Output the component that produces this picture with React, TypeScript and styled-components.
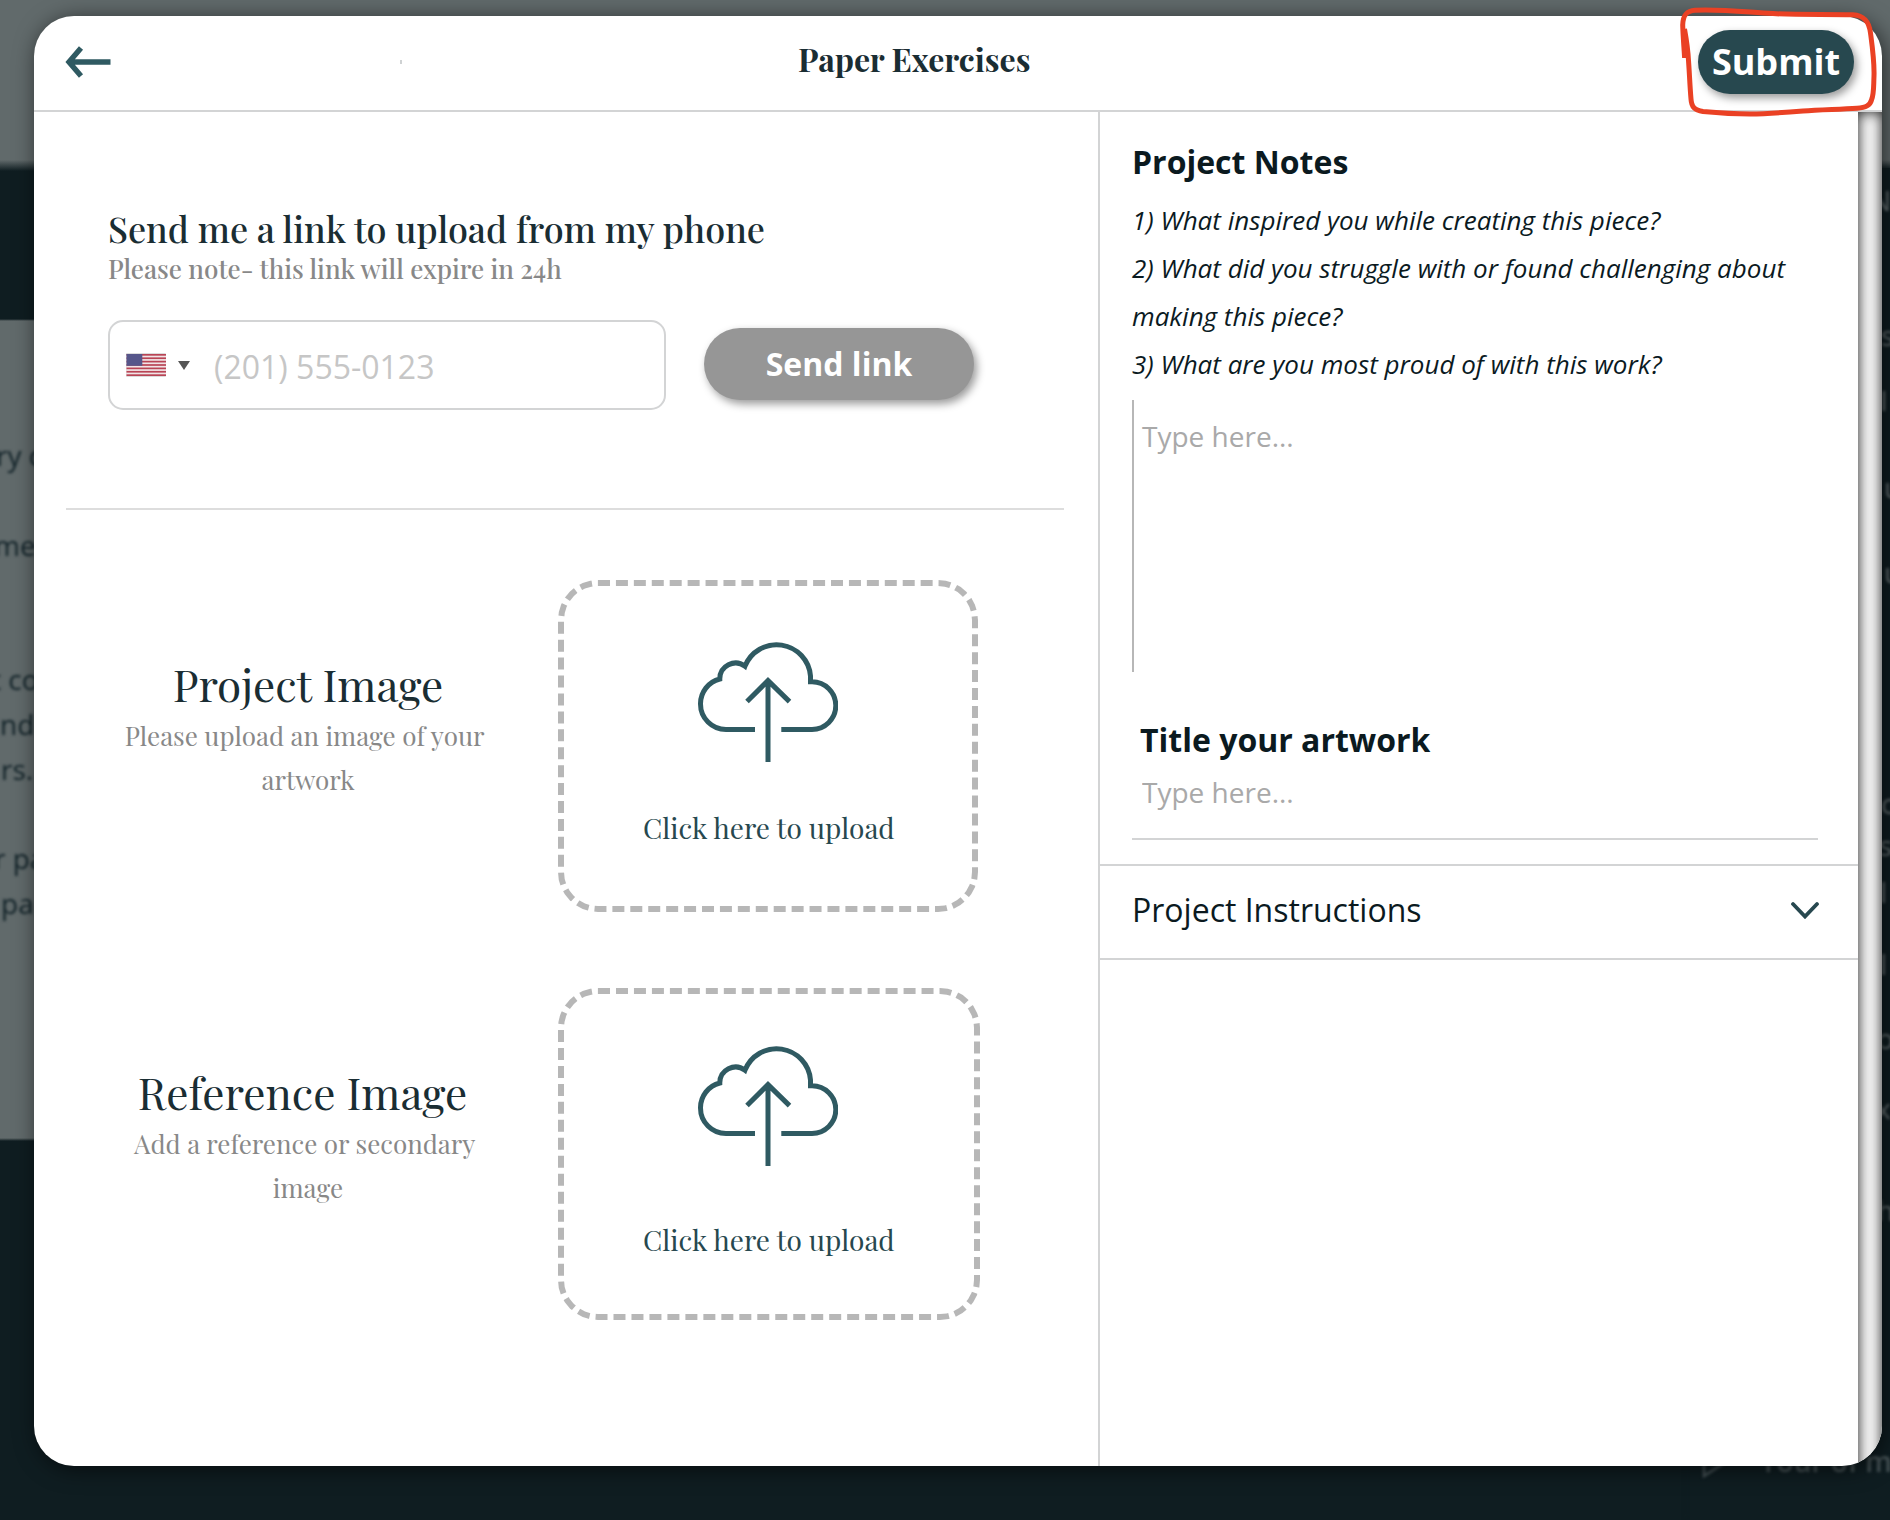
import React from 'react';
import styled, { createGlobalStyle } from 'styled-components';

const serif = `"Playfair Display", "Liberation Serif", serif`;
const sans = `"Open Sans", "Noto Sans", sans-serif`;
const teal = '#2f5a62';
const ink = '#1a2d33';
const line = '#d3d4d5';

const GlobalStyle = createGlobalStyle`
  *, *::before, *::after { box-sizing: border-box; }
  body { margin: 0; background: #0f1d21; font-family: ${sans}; }
  h1, h2, h3, p { margin: 0; font-weight: 400; }
  button, input, textarea { font-family: inherit; }
`;

const Page = styled.div`
  position: relative;
  display: flex;
  width: 1890px;
  height: 1520px;
  padding: 16px 8px 54px 34px;
  overflow: hidden;
`;

/* Dimmed page behind the dialog */
const Backdrop = styled.div`
  position: absolute;
  inset: 0;
  display: flex;
  justify-content: space-between;
  background: linear-gradient(#616a6b 0, #616a6b 160px, #0f1d21 171px, #0f1d21 319px, #616a6b 321px, #616a6b 1138px, #0f1d21 1141px);
`;

const LessonText = styled.div`
  width: 60px;
  padding-top: 433px;
  font-size: 28px;
  font-weight: 500;
  line-height: 44.8px;
  color: #0f2026;
  filter: blur(1.4px);
`;

const LessonLine = styled.p<{ $shift: number }>`
  height: 44.8px;
  font-weight: inherit;
  white-space: pre;
  text-indent: ${(p) => p.$shift}px;
`;

const Outline = styled.div`
  display: flex;
  flex-direction: column;
  width: 200px;
  margin-top: 168px;
  background: #0f1d21;
  box-shadow: 0 0 6px #0f1d21;
  color: #6a7476;
`;

const OutlineItem = styled.div<{ $gap: number; $shift: number }>`
  height: 24px;
  margin: ${(p) => p.$gap}px 0 0 ${(p) => p.$shift}px;
  font-size: 28px;
  line-height: 24px;
  white-space: nowrap;
  filter: blur(1.4px);
`;

const TourRow = styled.div`
  display: flex;
  align-items: center;
  gap: 31px;
  height: 36px;
  margin: 221px -40px 0 11px;
  font-size: 28px;
  font-weight: 600;
  white-space: nowrap;
  color: #465255;
  filter: blur(1.4px);
`;

const Dialog = styled.main`
  position: relative;
  display: flex;
  flex-direction: column;
  width: 1848px;
  height: 1450px;
  border-radius: 40px;
  background: #fff;
  box-shadow: 3px 3px 22px rgba(0, 0, 0, 0.6);
`;

const Header = styled.header`
  display: grid;
  grid-template-columns: 366px 398px auto 1fr;
  align-items: center;
  height: 96px;
  padding-bottom: 2px;
  border-bottom: 2px solid ${line};
`;

const BackButton = styled.button`
  display: flex;
  width: 46px;
  margin-left: 31px;
  padding: 0;
  border: 0;
  background: none;
`;

const Tick = styled.span`
  width: 2px;
  height: 4px;
  background: #cfd2d3;
`;

const Title = styled.h1`
  padding-bottom: 6px;
  font: 700 32px/44px ${serif};
  color: ${ink};
`;

const Pill = styled.button<{ $primary?: boolean }>`
  flex: none;
  width: ${(p) => (p.$primary ? 156 : 270)}px;
  height: ${(p) => (p.$primary ? 64 : 72)}px;
  margin: ${(p) => (p.$primary ? '0 28px 0 auto' : '0 0 2px')};
  padding: 0 0 2px;
  border: 0;
  border-radius: 36px;
  background: ${(p) => (p.$primary ? '#27484f' : '#969696')};
  box-shadow: 3px 4px 8px rgba(0, 0, 0, 0.4);
  font-size: ${(p) => (p.$primary ? 36 : 32)}px;
  font-weight: 700;
  color: #fff;
`;

const Body = styled.div`
  display: grid;
  grid-template-columns: 1064px 1fr 24px;
  flex: 1;
  min-height: 0;
  overflow: hidden;
  border-radius: 0 0 40px 40px;
`;

const UploadPane = styled.section`
  display: flex;
  flex-direction: column;
`;

const LinkSection = styled.div`
  height: 398px;
  margin: 0 34px 0 32px;
  padding: 92px 0 0 42px;
  border-bottom: 2px solid #dddddd;
`;

const LinkHeading = styled.h2`
  font: 500 36px/48px ${serif};
  color: ${ink};
`;

const LinkNote = styled.p`
  font: 500 26px/34px ${serif};
  color: #888888;
`;

const PhoneRow = styled.div`
  display: flex;
  align-items: center;
  gap: 38px;
  margin-top: 34px;
`;

const PhoneField = styled.div`
  display: flex;
  align-items: center;
  width: 558px;
  height: 90px;
  padding-left: 16px;
  border: 2px solid ${line};
  border-radius: 15px;
`;

const Caret = styled.span`
  margin: 0 24px 0 12px;
  border: 6px solid transparent;
  border-top: 9px solid #555;
  border-bottom: 0;
`;

const PhoneInput = styled.input`
  width: 400px;
  height: 60px;
  padding: 2px 0 0;
  border: 0;
  background: none;
  font-size: 32px;
  &::placeholder { color: #c6c6c6; opacity: 1; }
`;

const Uploads = styled.div`
  display: flex;
  flex-direction: column;
  gap: 76px;
  padding: 70px 0 0 74px;
`;

const UploadRow = styled.div`
  display: grid;
  grid-template-columns: 400px auto;
  column-gap: 50px;
  justify-content: start;
`;

const UploadText = styled.div`
  padding-top: 75px;
  text-align: center;
`;

const UploadHeading = styled.h2`
  font: 400 44px/58px ${serif};
  color: ${ink};
`;

const UploadHint = styled.p`
  margin-top: 1px;
  font: 400 26px/44px ${serif};
  color: #888888;
`;

const DropZone = styled.div<{ $width: number; $top: number; $gap: number }>`
  display: flex;
  flex-direction: column;
  gap: ${(p) => p.$gap}px;
  width: ${(p) => p.$width}px;
  height: 332px;
  padding: ${(p) => p.$top}px 0 0 134px;
  border: 6px dashed #b7b7b7;
  border-radius: 40px;
`;

const DropLabel = styled.span`
  width: 252px;
  margin-left: -55px;
  font: 400 28px/38px ${serif};
  white-space: nowrap;
  color: #27484f;
`;

const NotesPane = styled.aside`
  border-left: 2px solid ${line};
`;

const NotesForm = styled.div`
  display: flex;
  flex-direction: column;
  height: 752px;
  padding: 28px 40px 0 32px;
`;

const FieldTitle = styled.h3<{ $indent?: boolean }>`
  padding-left: ${(p) => (p.$indent ? 8 : 0)}px;
  font-size: 32px;
  font-weight: 700;
  line-height: 44px;
  color: #0b1a1f;
`;

const Questions = styled.div`
  margin-top: 12px;
  font-size: 26px;
  font-style: italic;
  line-height: 48px;
  color: #0b1a1f;
`;

const NotesInput = styled.textarea`
  height: 272px;
  margin: 12px 0 46px;
  padding: 17px 8px;
  border: 0;
  border-left: 2px solid #b7b7b7;
  resize: none;
  outline: none;
  font-size: 28px;
  line-height: 38px;
  &::placeholder { color: #a9a9a9; opacity: 1; }
`;

const TitleInput = styled.input`
  height: 78px;
  padding: 0 10px 17px;
  border: 0;
  border-bottom: 2px solid ${line};
  outline: none;
  font-size: 28px;
  &::placeholder { color: #a9a9a9; opacity: 1; }
`;

const Accordion = styled.button`
  display: flex;
  align-items: center;
  justify-content: space-between;
  width: 100%;
  height: 96px;
  padding: 0 38px 5px 32px;
  border: 0;
  border-top: 2px solid ${line};
  border-bottom: 2px solid ${line};
  background: none;
  font-size: 32px;
  color: #0b1a1f;
`;

const ScrollTrack = styled.div`
  margin-bottom: -24px;
  background: #f8f8f8;
  box-shadow: inset 0 0 14px rgba(0, 0, 0, 0.9);
`;

const Scribble = styled.svg`
  position: absolute;
  left: 1640px;
  top: 0;
`;

const ArrowIcon = () => (
  <svg width="46" height="32" viewBox="0 0 46 32" fill="none" stroke={teal} strokeWidth="5.4">
    <path d="M45.5 16H4M16 2L4 16l12 14" />
  </svg>
);

const FlagIcon = () => (
  <svg width="40" height="24" viewBox="0 0 40 24">
    <rect width="40" height="24" rx="1" fill="#dcdcdc" />
    <rect x=".5" y="1" width="39.5" height="22" fill="#f1e4e6" />
    {[0, 2, 4, 6, 8, 10, 12].map((i) => (
      <rect key={i} x=".5" y={1 + i * 1.692} width="39.5" height="1.692" fill="#b94455" />
    ))}
    <rect x=".5" y="1" width="15.8" height="11.8" fill="#56568a" />
  </svg>
);

const CloudIcon = () => (
  <svg width="140" height="120" viewBox="0 0 140 120" fill="none" stroke={teal} strokeWidth="5">
    <path d="M57 87.4H28A25.5 25.5 0 0 1 2.5 61.9A25.5 25.5 0 0 1 21.8 37A15.8 15.8 0 0 1 47 24.2A34 34 0 0 1 112.5 34V39.8H114A23.8 23.8 0 0 1 114 87.4H83.3" />
    <path d="M70 120V38M49 59.6L70 38.6L91.5 59.6" />
  </svg>
);

const ChevronIcon = () => (
  <svg width="30" height="18" viewBox="0 0 30 18" fill="none" stroke="#27484f" strokeWidth="3.8" strokeLinecap="round">
    <path d="M3 3l12 12.5L27 3" />
  </svg>
);

const lessonLines: [string, number][] = [
  ['ry c', -4], ['', 0], ['me', -6], ['', 0], ['', 0], ['t co', -9], ['nd', 0], ['rs.', 1], ['', 0], ['r pa', -6], ['pa', 1],
];

const outlineItems: [string, number, number][] = [
  ['N', 20, 180], ['s', 111, 191], ['I', 41, 190], ['u', 63, 194], ['u', 61, 194], ['c', 207, 191],
  ['s', 18, 189], ['l', 23, 190], ['l', 48, 190], ['o', 50, 187], ['x', 46, 186], ['h', 78, 187],
];

const uploads = [
  { heading: 'Project Image', first: 'Please upload an image of your', rest: 'artwork', width: 420, top: 56, gap: 47.4 },
  { heading: 'Reference Image\u00a0', first: 'Add a reference or secondary', rest: 'image', width: 422, top: 52, gap: 55.4 },
];

export default function App() {
  return (
    <Page>
      <GlobalStyle />
      <Backdrop>
        <LessonText>
          {lessonLines.map(([text, shift], i) => (
            <LessonLine key={i} $shift={shift}>{text}</LessonLine>
          ))}
        </LessonText>
        <Outline>
          {outlineItems.map(([text, gap, shift], i) => (
            <OutlineItem key={i} $gap={gap} $shift={shift}>{text}</OutlineItem>
          ))}
          <TourRow>
            <svg width="28" height="34" viewBox="0 0 28 34" fill="none" stroke="currentColor" strokeWidth="2.5">
              <path d="M3 3l23 14L3 32z" />
            </svg>
            <span>Your of m</span>
          </TourRow>
        </Outline>
      </Backdrop>

      <Dialog>
        <Header>
          <BackButton aria-label="Back"><ArrowIcon /></BackButton>
          <Tick />
          <Title>Paper Exercises</Title>
          <Pill $primary>Submit</Pill>
        </Header>
        <Body>
          <UploadPane>
            <LinkSection>
              <LinkHeading>Send me a link to upload from my phone</LinkHeading>
              <LinkNote>Please note- this link will expire in 24h</LinkNote>
              <PhoneRow>
                <PhoneField>
                  <FlagIcon />
                  <Caret />
                  <PhoneInput placeholder="(201) 555-0123" />
                </PhoneField>
                <Pill>Send link</Pill>
              </PhoneRow>
            </LinkSection>
            <Uploads>
              {uploads.map((u) => (
                <UploadRow key={u.heading}>
                  <UploadText>
                    <UploadHeading>{u.heading}</UploadHeading>
                    <UploadHint>{u.first}&nbsp;<br />{u.rest}</UploadHint>
                  </UploadText>
                  <DropZone $width={u.width} $top={u.top} $gap={u.gap}>
                    <CloudIcon />
                    <DropLabel>Click here to upload</DropLabel>
                  </DropZone>
                </UploadRow>
              ))}
            </Uploads>
          </UploadPane>
          <NotesPane>
            <NotesForm>
              <FieldTitle>Project Notes</FieldTitle>
              <Questions>
                <p>1) What inspired you while creating this piece?</p>
                <p>2) What did you struggle with or found challenging about making this piece?</p>
                <p>3) What are you most proud of with this work?</p>
              </Questions>
              <NotesInput placeholder="Type here..." />
              <FieldTitle $indent>Title your artwork</FieldTitle>
              <TitleInput placeholder="Type here..." />
            </NotesForm>
            <Accordion>
              Project Instructions
              <ChevronIcon />
            </Accordion>
          </NotesPane>
          <ScrollTrack />
        </Body>
      </Dialog>

      <Scribble width="250" height="130" viewBox="0 0 250 130" fill="none" stroke="#ea4124" strokeWidth="5" strokeLinejoin="round">
        <path d="M44.6 57.8C44 47 43 36 42.7 25C43 15 46.5 10.8 55 10.3C80 9 105 12 133 13.6C160 15 190 14 213 14.8C224 15.5 229 21 230.5 33C232.5 48 234.5 62 234 76C233.5 88 234 94 231.5 100C230 105.5 226 107.6 217 108.2C200 109.5 180 109.5 163 111C145 112.5 128 113.8 110 114C93 114 77 112.8 63 111.5C54.5 110 51.5 107 51 99C49.8 85 49.5 74 48.6 62C48 50 46.5 40 44.5 29" />
      </Scribble>
    </Page>
  );
}
